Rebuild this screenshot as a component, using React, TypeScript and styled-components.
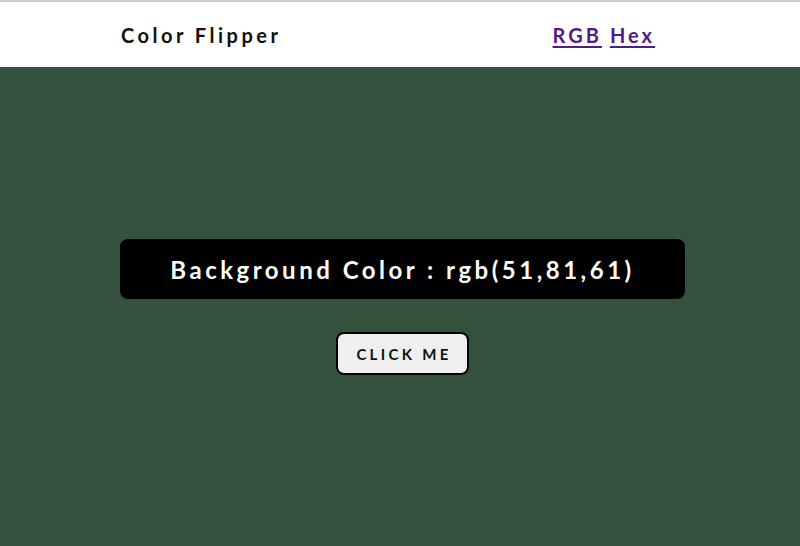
import React, { useState } from "react";
import styled, { createGlobalStyle } from "styled-components";

const Global = createGlobalStyle`
  html, body { margin: 0; padding: 0; }
  body {
    font-family: Lato, "Open Sans", "Liberation Sans", sans-serif;
    background: #33513d;
  }
  #root { min-height: 546px; }
`;

const Page = styled.div<{ $bg: string }>`
  min-height: 546px;
  display: flex;
  flex-direction: column;
  background: ${(p) => p.$bg};
  border-top: 2px solid #cfcfcf;
  box-sizing: border-box;
`;

const Nav = styled.nav`
  background: #ffffff;
  height: 65px;
  display: flex;
  align-items: center;
`;

const NavInner = styled.div`
  width: 531px;
  margin-left: 121px;
  display: flex;
  justify-content: space-between;
  align-items: center;
`;

const Brand = styled.h4`
  margin: 0;
  font-size: 20px;
  font-weight: 700;
  letter-spacing: 3.5px;
  color: #111;
`;

const Links = styled.div`
  display: flex;
  gap: 11px;
`;

const NavLink = styled.a`
  color: #551a8b;
  font-size: 20px;
  font-weight: 700;
  letter-spacing: 3px;
  text-decoration: underline;
  text-underline-offset: 3px;
  margin-right: -3px;
`;

const Main = styled.main`
  flex: 1;
  display: flex;
  flex-direction: column;
  align-items: center;
  padding-top: 172px;
  padding-left: 5px;
`;

const Banner = styled.h2`
  margin: 0;
  width: 565px;
  height: 60px;
  box-sizing: border-box;
  background: #000;
  color: #fff;
  border-radius: 8px;
  display: flex;
  align-items: center;
  justify-content: center;
  font-size: 24px;
  font-weight: 700;
  letter-spacing: 3.5px;
`;

const Button = styled.button`
  margin-top: 33px;
  width: 133px;
  height: 43px;
  background: #efefef;
  border: 2px solid #000;
  border-radius: 8px;
  font-family: inherit;
  font-size: 15px;
  font-weight: 700;
  letter-spacing: 3.3px;
  color: #111;
  text-transform: uppercase;
  cursor: pointer;
  padding: 0 0 0 3px;
`;

export default function App() {
  const [rgb] = useState([51, 81, 61]);
  const color = `rgb(${rgb.join(",")})`;
  return (
    <>
      <Global />
      <Page $bg={color}>
        <Nav>
          <NavInner>
            <Brand>Color Flipper</Brand>
            <Links>
              <NavLink href="#">RGB</NavLink>
              <NavLink href="#">Hex</NavLink>
            </Links>
          </NavInner>
        </Nav>
        <Main>
          <Banner>Background Color : {color}</Banner>
          <Button>Click me</Button>
        </Main>
      </Page>
    </>
  );
}
